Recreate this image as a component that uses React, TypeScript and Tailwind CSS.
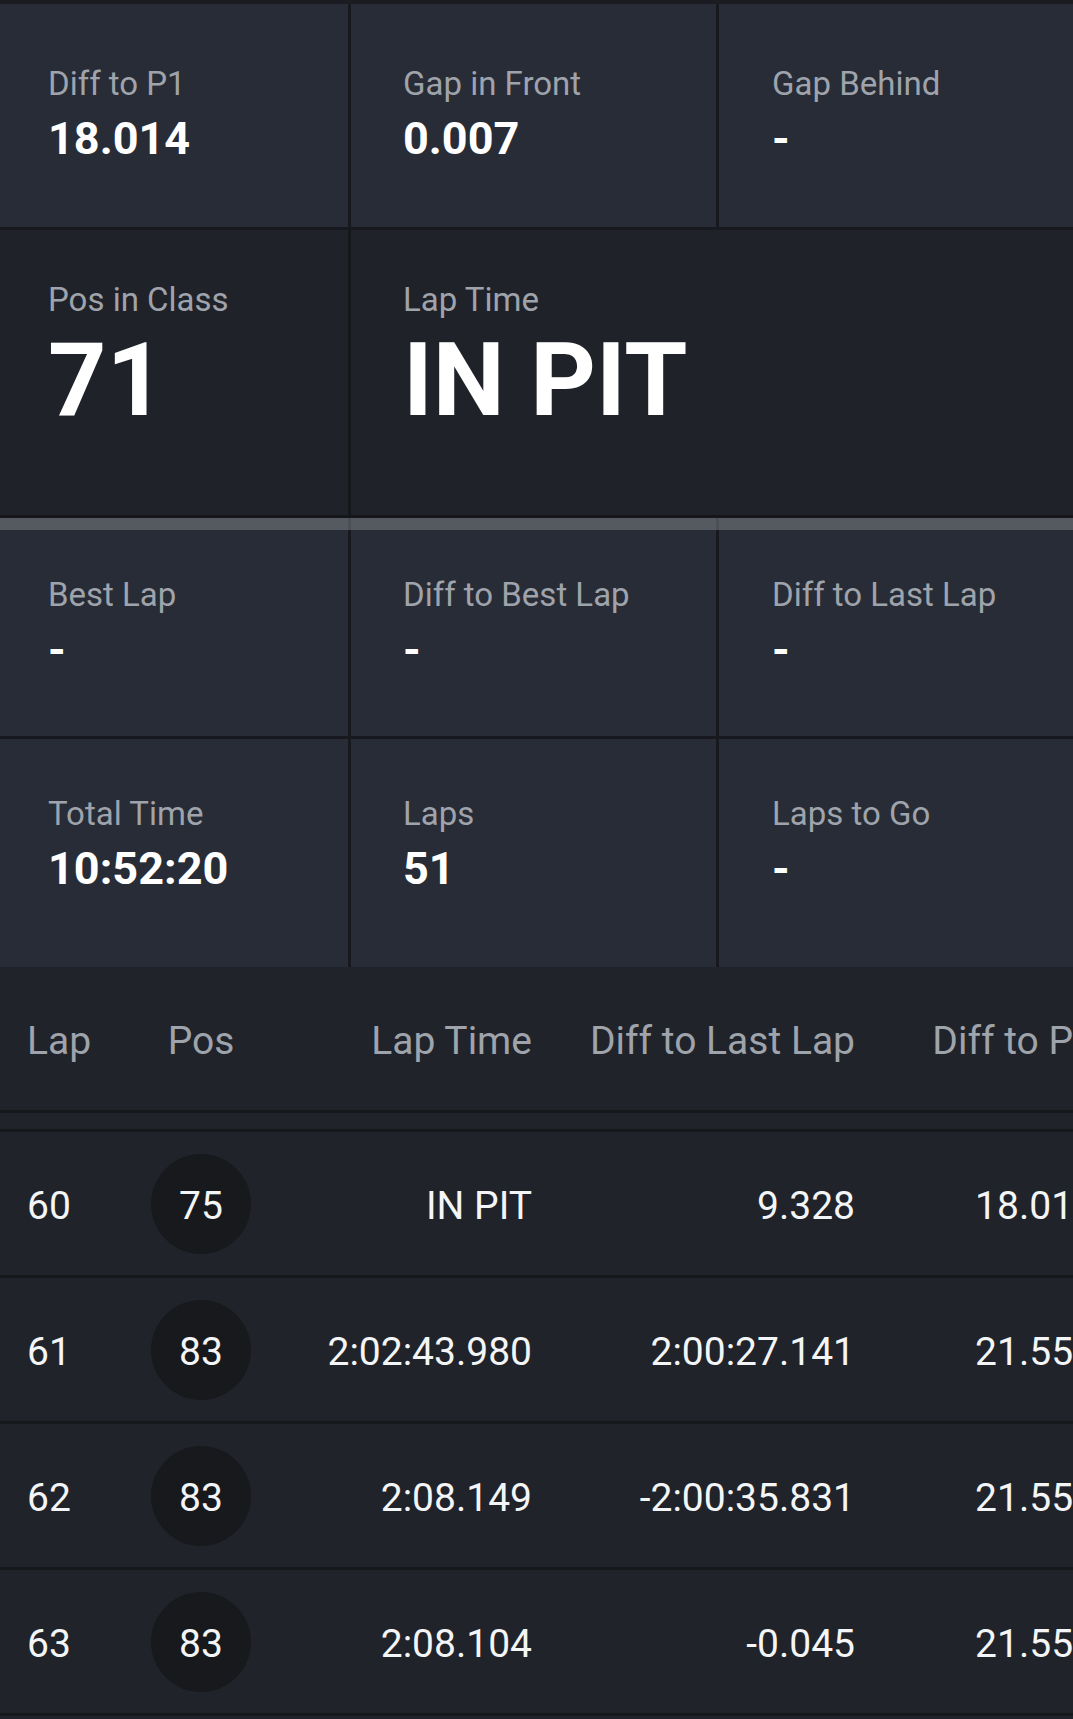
import React from "react";

type StatProps = {
  label: string;
  value: string;
  big?: boolean;
  pad: string;
  top: string;
  className?: string;
};

const Stat: React.FC<StatProps> = ({ label, value, big, pad, top, className }) => (
  <div className={`flex flex-col ${pad} ${top} ${className ?? ""}`}>
    <span className="text-[33px] leading-[40px] text-[#9fa3ab]">{label}</span>
    {big ? (
      <span className="mt-[9px] text-[102px] leading-[102px] font-bold text-white">{value}</span>
    ) : (
      <span className="mt-[8px] text-[45px] leading-[54px] font-bold text-white">{value}</span>
    )}
  </div>
);

const laps = [
  { lap: "60", pos: "75", time: "IN PIT", diffLast: "9.328", diffP1: "18.014" },
  { lap: "61", pos: "83", time: "2:02:43.980", diffLast: "2:00:27.141", diffP1: "21.553" },
  { lap: "62", pos: "83", time: "2:08.149", diffLast: "-2:00:35.831", diffP1: "21.553" },
  { lap: "63", pos: "83", time: "2:08.104", diffLast: "-0.045", diffP1: "21.553" },
];

const cols = "grid grid-cols-[130px_142px_260px_323px_240px] w-[1095px]";

export default function App() {
  return (
    <div
      className="w-[1073px] min-h-[1719px] overflow-hidden bg-[#20232a]"
      style={{ fontFamily: "Roboto, 'Noto Sans', sans-serif" }}
    >
      {/* stats */}
      <div className="border-t-[4px] border-[#1a1c21]">
        <div className="grid grid-cols-[351px_368px_1fr] h-[226px] bg-[#282c36] border-b-[3px] border-[#17191e]">
          <Stat label="Diff to P1" value="18.014" pad="pl-[48px]" top="pt-[60px]" className="border-r-[3px] border-[#17191e]" />
          <Stat label="Gap in Front" value="0.007" pad="pl-[52px]" top="pt-[60px]" className="border-r-[3px] border-[#17191e]" />
          <Stat label="Gap Behind" value="-" pad="pl-[53px]" top="pt-[60px]" />
        </div>
        <div className="grid grid-cols-[351px_1fr] h-[288px] bg-[#1f2229] border-b-[3px] border-[#15171b]">
          <Stat label="Pos in Class" value="71" big pad="pl-[48px]" top="pt-[50px]" className="border-r-[3px] border-[#15171b]" />
          <Stat label="Lap Time" value="IN PIT" big pad="pl-[52px]" top="pt-[50px]" />
        </div>
        {/* progress strip */}
        <div className="grid grid-cols-[351px_368px_1fr] h-[12px] bg-[#555960]">
          <div className="border-r-[3px] border-[#4b4f56]" />
          <div className="border-r-[3px] border-[#4b4f56]" />
          <div />
        </div>
        <div className="grid grid-cols-[351px_368px_1fr] h-[209px] bg-[#282c36] border-b-[3px] border-[#17191e]">
          <Stat label="Best Lap" value="-" pad="pl-[48px]" top="pt-[45px]" className="border-r-[3px] border-[#17191e]" />
          <Stat label="Diff to Best Lap" value="-" pad="pl-[52px]" top="pt-[45px]" className="border-r-[3px] border-[#17191e]" />
          <Stat label="Diff to Last Lap" value="-" pad="pl-[53px]" top="pt-[45px]" />
        </div>
        <div className="grid grid-cols-[351px_368px_1fr] h-[228px] bg-[#282c36]">
          <Stat label="Total Time" value="10:52:20" pad="pl-[48px]" top="pt-[55px]" className="border-r-[3px] border-[#17191e]" />
          <Stat label="Laps" value="51" pad="pl-[52px]" top="pt-[55px]" className="border-r-[3px] border-[#17191e]" />
          <Stat label="Laps to Go" value="-" pad="pl-[53px]" top="pt-[55px]" />
        </div>
      </div>

      {/* lap table */}
      <div className="text-[39px] leading-[46px]">
        <div className="h-[146px] border-b-[3px] border-[#16181c]">
          <div className={`${cols} h-full items-center pt-[4px] text-[#9fa3ab]`}>
            <span className="pl-[27px]">Lap</span>
            <span className="text-center">Pos</span>
            <span className="text-right">Lap Time</span>
            <span className="text-right">Diff to Last Lap</span>
            <span className="text-right">Diff to P1</span>
          </div>
        </div>
        <div className="h-[19px] border-b-[3px] border-[#16181c]" />
        {laps.map((l) => (
          <div key={l.lap} className="h-[146px] border-b-[3px] border-[#16181c]">
            <div className={`${cols} h-full items-center text-[#f4f5f7]`}>
              <span className="pl-[27px] pt-[5px]">{l.lap}</span>
              <div className="flex justify-center">
                <span className="flex h-[100px] w-[100px] items-center justify-center rounded-full bg-[#17191d] pt-[5px]">
                  {l.pos}
                </span>
              </div>
              <span className="text-right pt-[5px]">{l.time}</span>
              <span className="text-right pt-[5px]">{l.diffLast}</span>
              <span className="text-right pt-[5px]">{l.diffP1}</span>
            </div>
          </div>
        ))}
      </div>
    </div>
  );
}
